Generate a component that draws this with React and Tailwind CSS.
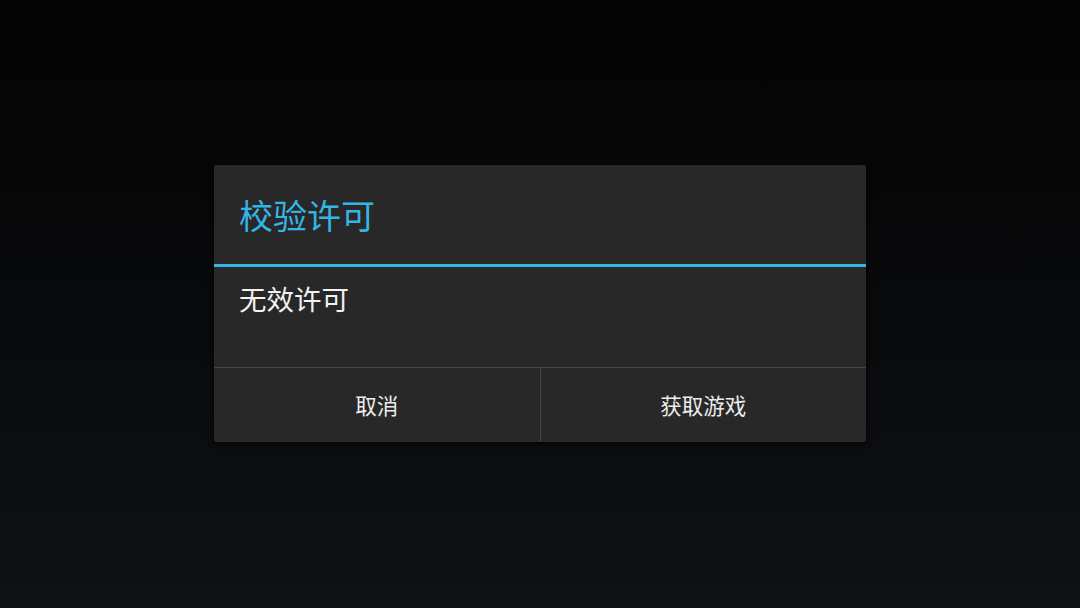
export default function App() {
  const font = { fontFamily: '"Noto Sans CJK SC", "Noto Sans", sans-serif' };
  return (
    <div
      className="w-[1080px] h-[608px] flex items-center justify-center pb-[1px] bg-gradient-to-b from-[#040404] to-[#0f1115]"
      style={font}
    >
      <div className="w-[652px] h-[277px] flex flex-col bg-[#282828] rounded-[2px] shadow-[0_2px_6px_rgba(0,0,0,0.7)]">
        {/* title */}
        <div className="h-[99px] flex items-center pl-[25px]">
          <span className="text-[34px] leading-none text-[#33b5e5]">校验许可</span>
        </div>
        <div className="h-[3px] bg-[#33b5e5]" />
        {/* message */}
        <div className="h-[100px] pl-[25px] pt-[13px]">
          <span className="text-[27.5px] leading-[36px] text-[#f2f2f2]">无效许可</span>
        </div>
        <div className="h-px bg-[#454545]" />
        {/* buttons */}
        <div className="flex-1 flex">
          <div className="flex-1 flex items-center justify-center text-[21.5px] text-[#ececec]">取消</div>
          <div className="w-px bg-[#454545]" />
          <div className="flex-1 flex items-center justify-center text-[21.5px] text-[#ececec]">获取游戏</div>
        </div>
      </div>
    </div>
  );
}
